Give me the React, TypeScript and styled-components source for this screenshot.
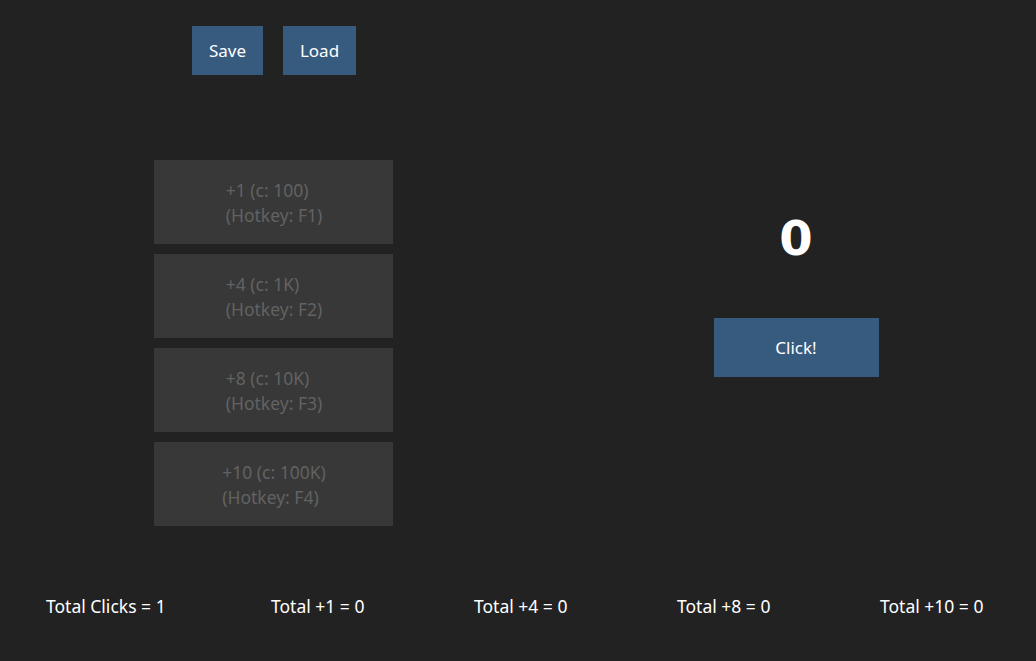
import React, { useState } from "react";
import styled, { createGlobalStyle } from "styled-components";

const GlobalStyle = createGlobalStyle`
  html, body {
    margin: 0;
    padding: 0;
    background: #222222;
    color: #ffffff;
    font-family: "Noto Sans", "Open Sans", Arial, sans-serif;
    font-size: 17.5px;
  }
`;

const upgrades = [
  { amount: 1, cost: "100", key: "F1" },
  { amount: 4, cost: "1K", key: "F2" },
  { amount: 8, cost: "10K", key: "F3" },
  { amount: 10, cost: "100K", key: "F4" },
];

const Page = styled.div`
  width: 1036px;
  height: 661px;
  display: flex;
  flex-direction: column;
`;

const Main = styled.div`
  display: grid;
  grid-template-columns: 546px 480px;
  column-gap: 10px;
  height: 595px;
`;

const LeftColumn = styled.div`
  display: flex;
  flex-direction: column;
  align-items: center;
  padding-top: 26px;
`;

const Toolbar = styled.div`
  display: flex;
  gap: 20px;
  margin-bottom: 85px;
  margin-left: 2px;
`;

const PrimaryButton = styled.button<{ $w: number; $h: number }>`
  width: ${(p) => p.$w}px;
  height: ${(p) => p.$h}px;
  background: #375a7f;
  color: #ffffff;
  border: none;
  border-radius: 0;
  font-family: inherit;
  font-size: 17px;
  cursor: pointer;
  padding: 0;
`;

const UpgradeList = styled.div`
  display: flex;
  flex-direction: column;
  gap: 10px;
`;

const UpgradeButton = styled.button`
  width: 239px;
  height: 84px;
  background: #383838;
  border: none;
  border-radius: 0;
  display: flex;
  align-items: center;
  justify-content: center;
  font-family: inherit;
  font-size: 17.5px;
  color: #626262;
  cursor: default;
  padding: 2px 0 0 2px;
`;

const UpgradeLabel = styled.span`
  display: flex;
  flex-direction: column;
  align-items: flex-start;
  line-height: 25px;
`;

const RightColumn = styled.div`
  display: flex;
  flex-direction: column;
  align-items: center;
  padding-top: 208px;
`;

const Counter = styled.div`
  font-family: "DejaVu Sans", sans-serif;
  font-size: 48px;
  font-weight: 700;
  line-height: 60px;
  margin-bottom: 50px;
`;

const TotalsRow = styled.div`
  display: grid;
  grid-template-columns: 225px 203px 203px 203px auto;
  padding-left: 46px;
  line-height: 22px;
`;

const Total = styled.span`
  color: #ffffff;
  white-space: nowrap;
`;

export default function App() {
  const [count, setCount] = useState(0);
  const [clicks, setClicks] = useState(1);

  return (
    <Page>
      <GlobalStyle />
      <Main>
        <LeftColumn>
          <Toolbar>
            <PrimaryButton $w={71} $h={49}>Save</PrimaryButton>
            <PrimaryButton $w={73} $h={49}>Load</PrimaryButton>
          </Toolbar>
          <UpgradeList>
            {upgrades.map((u) => (
              <UpgradeButton key={u.key} disabled>
                <UpgradeLabel>
                  <span>+{u.amount} (c: {u.cost})</span>
                  <span>(Hotkey: {u.key})</span>
                </UpgradeLabel>
              </UpgradeButton>
            ))}
          </UpgradeList>
        </LeftColumn>
        <RightColumn>
          <Counter>{count}</Counter>
          <PrimaryButton
            $w={165}
            $h={59}
            onClick={() => {
              setCount(count + 1);
              setClicks(clicks + 1);
            }}
          >
            Click!
          </PrimaryButton>
        </RightColumn>
      </Main>
      <TotalsRow>
        <Total>Total Clicks = {clicks}</Total>
        <Total>Total +1 = 0</Total>
        <Total>Total +4 = 0</Total>
        <Total>Total +8 = 0</Total>
        <Total>Total +10 = 0</Total>
      </TotalsRow>
    </Page>
  );
}
